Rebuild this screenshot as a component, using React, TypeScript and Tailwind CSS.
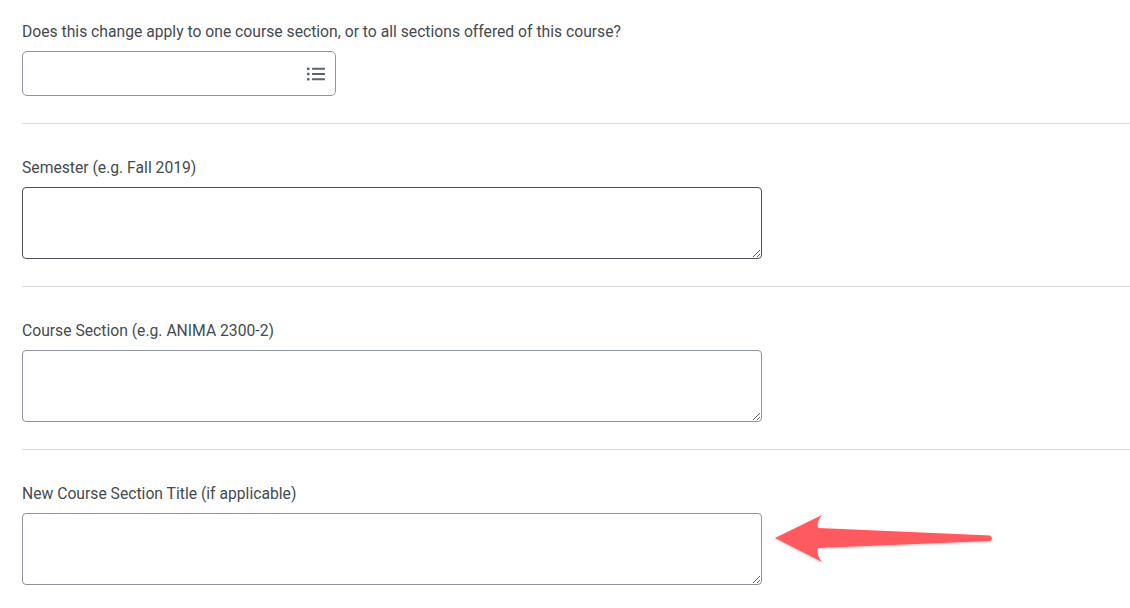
function ListIcon() {
  return (
    <svg width="20" height="16" viewBox="0 0 20 16" fill="#5c636b">
      <rect x="1" y="1.5" width="2.5" height="2.5" rx="0.5" />
      <rect x="1" y="6.75" width="2.5" height="2.5" rx="0.5" />
      <rect x="1" y="12" width="2.5" height="2.5" rx="0.5" />
      <rect x="6" y="1.75" width="13" height="2" rx="0.5" />
      <rect x="6" y="7" width="13" height="2" rx="0.5" />
      <rect x="6" y="12.25" width="13" height="2" rx="0.5" />
    </svg>
  );
}

function Field({
  label,
  focused,
}: {
  label: string;
  focused?: boolean;
}) {
  return (
    <div className="pt-[34px] pb-[27px] border-b border-[#d8dce0]">
      <label className="block text-[15.7px] leading-5 text-[#454a4f]">{label}</label>
      <textarea
        className={
          "mt-[9px] block h-[72px] w-[740px] resize-y rounded-[4px] bg-white outline-none " +
          (focused
            ? "border-[1.5px] border-[#4b5157]"
            : "border border-[#8d949c]")
        }
      />
    </div>
  );
}

export default function App() {
  return (
    <div
      className="relative h-[608px] w-[1130px] overflow-hidden bg-white pl-[22px]"
      style={{ fontFamily: "Roboto, 'Liberation Sans', sans-serif" }}
    >
      <div className="pt-[22px] pb-[27px] border-b border-[#d8dce0]">
        <label className="block text-[15.7px] leading-5 text-[#454a4f]">
          Does this change apply to one course section, or to all sections offered of this course?
        </label>
        <div className="mt-[9px] flex h-[45px] w-[314px] items-center justify-end rounded-[5px] border border-[#8d949c] pr-[9px]">
          <ListIcon />
        </div>
      </div>
      <Field label="Semester (e.g. Fall 2019)" focused />
      <Field label="Course Section (e.g. ANIMA 2300-2)" />
      <Field label="New Course Section Title (if applicable)" />

      <svg
        className="pointer-events-none absolute left-[770px] top-[508px]"
        width="230"
        height="62"
        viewBox="770 508 230 62"
      >
        <defs>
          <filter id="sh" x="-10%" y="-30%" width="120%" height="160%">
            <feDropShadow dx="0" dy="1" stdDeviation="0.8" floodColor="#000" floodOpacity="0.25" />
          </filter>
        </defs>
        <path
          d="M775 538 L822 515 Q816 522 818 528 L990 535.5 Q994 538.5 990 541 L818 548 Q816 555 822 562 Z"
          fill="#ff5a5f"
          filter="url(#sh)"
        />
      </svg>
    </div>
  );
}
